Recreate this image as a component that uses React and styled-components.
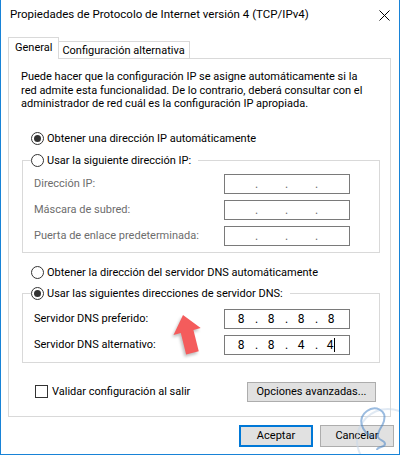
import React from 'react';
import styled, { createGlobalStyle } from 'styled-components';

const GlobalStyle = createGlobalStyle`
  html, body { margin: 0; padding: 0; background: #fff; }
  body {
    font-family: "Segoe UI", Roboto, "Noto Sans", sans-serif;
    font-size: 11px;
    color: #000;
  }
  * { box-sizing: border-box; }
`;

const Window = styled.div`
  position: relative;
  width: 400px;
  height: 455px;
  background: #fff;
  border-left: 1px solid #1883d7;
  border-right: 1px solid #1883d7;
  border-bottom: 1px solid #1883d7;
  display: flex;
  flex-direction: column;
  overflow: hidden;
`;

const TitleBar = styled.div`
  height: 30px;
  display: flex;
  align-items: center;
  justify-content: space-between;
  padding: 0 9px 2px 9px;
  font-size: 11.5px;
`;

const CloseIcon = styled.svg`
  width: 11px;
  height: 11px;
  margin-top: 2px;
`;

const TabRow = styled.div`
  margin-top: 7px;
  height: 21px;
  padding-left: 7px;
  display: flex;
  align-items: flex-end;
`;

const Tab = styled.div`
  height: ${p => (p.$active ? '22px' : '17px')};
  margin-bottom: ${p => (p.$active ? '-1px' : '0')};
  padding: ${p => (p.$active ? '0 6px 2px' : '0 4px 0 3px')};
  border: 1px solid #d9d9d9;
  border-bottom: none;
  ${p => (!p.$active ? 'border-left: none;' : '')}
  background: #fff;
  position: relative;
  z-index: 1;
  display: flex;
  align-items: center;
  white-space: nowrap;
`;

const Panel = styled.div`
  margin: 0 8px 0 7px;
  border: 1px solid #d9d9d9;
  padding: 11px 10px 14px 13px;
  display: flex;
  flex-direction: column;
`;

const Description = styled.p`
  margin: 0 0 0 -1px;
  line-height: 13.5px;
  white-space: nowrap;
`;

const OptionRow = styled.label`
  display: flex;
  align-items: center;
  gap: 3px;
  height: 16px;
  margin-left: ${p => p.$indent || 0}px;
  margin-top: ${p => p.$top || 0}px;
  white-space: nowrap;
`;

const RadioCircle = styled.span`
  flex: none;
  width: 13px;
  height: 13px;
  border-radius: 50%;
  border: 1px solid #333;
  background: #fff;
  display: inline-flex;
  align-items: center;
  justify-content: center;
  &::after {
    content: '';
    width: 7px;
    height: 7px;
    border-radius: 50%;
    background: #333;
    display: ${p => (p.$checked ? 'block' : 'none')};
  }
`;

const CheckBox = styled.span`
  flex: none;
  width: 13px;
  height: 13px;
  border: 1px solid #333;
  background: #fff;
  margin-right: 1px;
`;

const Group = styled.fieldset`
  margin: ${p => p.$top || 0}px 0 0 0;
  padding: ${p => p.$pt}px 29px ${p => p.$pb}px 11px;
  border: 1px solid #d9d9d9;
  display: flex;
  flex-direction: column;
  gap: 6px;
  min-width: 0;
`;

const Legend = styled.legend`
  padding: 0 7px 0 0;
  margin-left: -3px;
  height: 16px;
  display: flex;
  align-items: center;
  gap: 3px;
  white-space: nowrap;
`;

const FieldRow = styled.div`
  display: flex;
  align-items: center;
  justify-content: space-between;
  height: 20px;
  color: ${p => (p.$disabled ? '#6d6d6d' : '#000')};
`;

const IpBox = styled.div`
  width: 126px;
  height: 20px;
  border: 1px solid #7a7a7a;
  background: #fff;
  padding-left: 2px;
  display: grid;
  grid-template-columns: 28px 2px 28px 2px 28px 2px 28px;
  align-items: center;
  font-size: 12px;
  color: ${p => (p.$disabled ? '#6d6d6d' : '#000')};
`;

const Octet = styled.span`
  text-align: center;
  line-height: 18px;
`;

const Dot = styled.span`
  text-align: center;
  line-height: 18px;
`;

const Caret = styled.span`
  border-right: 1px solid #000;
  padding-right: 1px;
`;

const BottomRow = styled.div`
  margin-top: 19px;
  display: flex;
  align-items: center;
  justify-content: space-between;
  padding-right: 4px;
`;

const Button = styled.button`
  font: inherit;
  color: #000;
  height: ${p => p.$h || 20}px;
  width: ${p => p.$w}px;
  padding: 0;
  background: #e1e1e1;
  border: ${p => (p.$default ? '2px solid #0078d7' : '1px solid #adadad')};
  display: flex;
  align-items: center;
  justify-content: center;
  white-space: nowrap;
`;

const Footer = styled.div`
  margin-top: 8px;
  padding-right: 5px;
  display: flex;
  justify-content: flex-end;
  gap: 7px;
`;

const Overlay = styled.svg`
  position: absolute;
  left: 0;
  top: 0;
  pointer-events: none;
`;

function IpField({ values, disabled, caret }) {
  const cells = [];
  (values || ['', '', '', '']).forEach((v, i) => {
    if (i > 0) cells.push(<Dot key={'d' + i}>.</Dot>);
    const last = i === 3;
    cells.push(
      <Octet key={'o' + i}>{last && caret ? <Caret>{v}</Caret> : v}</Octet>
    );
  });
  return <IpBox $disabled={disabled}>{cells}</IpBox>;
}

export default function App() {
  return (
    <>
      <GlobalStyle />
      <Window>
        <TitleBar>
          <span>Propiedades de Protocolo de Internet versión 4 (TCP/IPv4)</span>
          <CloseIcon viewBox="0 0 11 11">
            <path d="M0.5 0.5 L10.5 10.5 M10.5 0.5 L0.5 10.5" stroke="#000" strokeWidth="1" fill="none" />
          </CloseIcon>
        </TitleBar>

        <TabRow>
          <Tab $active>General</Tab>
          <Tab>Configuración alternativa</Tab>
        </TabRow>

        <Panel>
          <Description>
            Puede hacer que la configuración IP se asigne automáticamente si la
            <br />
            red admite esta funcionalidad. De lo contrario, deberá consultar con el
            <br />
            administrador de red cuál es la configuración IP apropiada.
          </Description>

          <OptionRow $indent={9} $top={20}>
            <RadioCircle $checked />
            Obtener una dirección IP automáticamente
          </OptionRow>

          <Group $top={6} $pt={5} $pb={6}>
            <Legend>
              <RadioCircle />
              Usar la siguiente dirección IP:
            </Legend>
            <FieldRow $disabled>
              <span>Dirección IP:</span>
              <IpField disabled />
            </FieldRow>
            <FieldRow $disabled>
              <span>Máscara de subred:</span>
              <IpField disabled />
            </FieldRow>
            <FieldRow $disabled>
              <span>Puerta de enlace predeterminada:</span>
              <IpField disabled />
            </FieldRow>
          </Group>

          <OptionRow $indent={9} $top={12}>
            <RadioCircle />
            Obtener la dirección del servidor DNS automáticamente
          </OptionRow>

          <Group $top={5} $pt={7} $pb={7}>
            <Legend>
              <RadioCircle $checked />
              Usar las siguientes direcciones de servidor DNS:
            </Legend>
            <FieldRow>
              <span>Servidor DNS preferido:</span>
              <IpField values={['8', '8', '8', '8']} />
            </FieldRow>
            <FieldRow>
              <span>Servidor DNS alternativo:</span>
              <IpField values={['8', '8', '4', '4']} caret />
            </FieldRow>
          </Group>

          <BottomRow>
            <OptionRow $indent={13}>
              <CheckBox />
              Validar configuración al salir
            </OptionRow>
            <Button $w={129}>Opciones avanzadas...</Button>
          </BottomRow>
        </Panel>

        <Footer>
          <Button $w={74} $h={22} $default>Aceptar</Button>
          <Button $w={74} $h={22}>Cancelar</Button>
        </Footer>

        <Overlay width="400" height="455" viewBox="0 0 400 455">
          <defs>
            <filter id="shadow" x="-50%" y="-50%" width="200%" height="200%">
              <feGaussianBlur stdDeviation="1.5" />
            </filter>
          </defs>
          <g transform="translate(182 315) rotate(-14)">
            <polygon
              points="0,0 14,17 6.5,17 6.5,39 -6.5,39 -6.5,17 -14,17"
              fill="#000"
              opacity="0.25"
              transform="translate(-2 2)"
              filter="url(#shadow)"
            />
            <polygon points="0,0 14,17 6.5,17 6.5,39 -6.5,39 -6.5,17 -14,17" fill="#f45c5c" />
          </g>
          <g opacity="0.55" fill="none" stroke="#4a86c8">
            <circle cx="387" cy="440" r="31" stroke="#c8d8ea" strokeWidth="2" />
            <path
              d="M372 437 C360 432 356 418 366 411 C374 405 386 410 383 421 C381 428 376 431 377 437 C378 441 384 440 384 444 C384 448 376 446 376 450"
              strokeWidth="2"
            />
          </g>
        </Overlay>
      </Window>
    </>
  );
}
